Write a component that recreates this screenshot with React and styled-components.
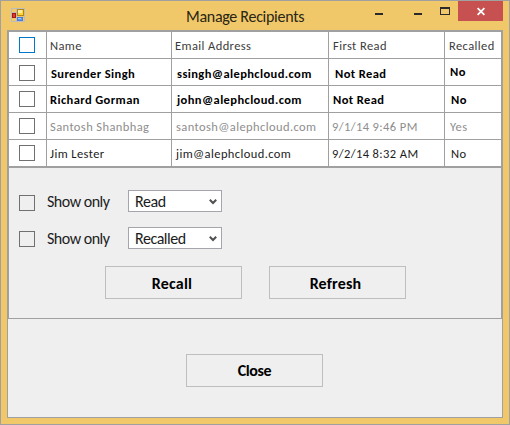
import React, { useState } from "react";
import styled, { createGlobalStyle, css } from "styled-components";

const line = "#a0a0a0";

const GlobalStyle = createGlobalStyle`
  *, *::before, *::after { box-sizing: border-box; }
  body { margin: 0; overflow: hidden; }
`;

const Window = styled.div`
  display: flex;
  flex-direction: column;
  width: 510px;
  height: 425px;
  padding: 0 6px 6px;
  border: 1px solid ${line};
  background: #f0c869;
  color: #000;
  font-family: Calibri, Carlito, "Open Sans", sans-serif;
`;

const TitleBar = styled.header`
  display: grid;
  grid-template-columns: 175px 1fr auto;
  height: 29px;
  flex: none;
`;

const AppIcon = styled.svg`
  margin: 7px 0 0 4px;
`;

const Title = styled.h1`
  margin: 0 0 0 4px;
  font-size: 16px;
  font-weight: 400;
  line-height: 31px;
  letter-spacing: -0.29px;
  color: #2b2515;
  white-space: nowrap;
`;

const Controls = styled.div`
  display: flex;
  align-items: flex-start;
`;

const ControlButton = styled.button`
  display: block;
  width: ${(p) => p.$width}px;
  height: 20px;
  padding: 0;
  border: 0;
  background: ${(p) => (p.$danger ? "#c75050" : "transparent")};

  svg { display: block; }
`;

const Body = styled.main`
  display: flex;
  flex-direction: column;
  flex: 1;
  border: 1px solid ${line};
  background: #efefef;
`;

const Panel = styled.section`
  height: 288px;
  border: 1px solid ${line};
`;

const Table = styled.div`
  border-bottom: 2px solid ${line};
  background: #fff;
`;

const tones = {
  header: css`color: #3c3c3c;`,
  unread: css`font-weight: 700;`,
  muted: css`color: #8e8e8e;`,
  normal: css`color: #1c1c1c;`,
};

const Row = styled.div`
  display: grid;
  grid-template-columns: 38px 125px 157px 116px 56px;
  height: 27px;
  font-size: 12.5px;
  letter-spacing: 0.4px;
  ${(p) => tones[p.$tone]}

  & > * { border-bottom: 1px solid ${line}; }
  &:last-child { height: 26px; }
  &:last-child > * { border-bottom: 0; }
`;

const Cell = styled.div`
  padding: ${(p) => p.$top ?? 1}px 0 0 ${(p) => p.$left ?? 4}px;
  border-right: 1px solid ${line};
  line-height: 26px;
  white-space: nowrap;
  overflow: hidden;

  &:last-child { border-right: 0; }
`;

const CheckCell = styled(Cell)`
  padding: ${(p) => p.$top}px 0 0 10px;
`;

const Checkbox = styled.input`
  appearance: none;
  display: block;
  flex: none;
  width: 16px;
  height: 16px;
  margin: 0;
  border: 1px solid ${(p) => (p.$active ? "#0077c8" : "#707070")};
  background: ${(p) => (p.$plain ? "transparent" : "#fff")};

  &:checked { box-shadow: inset 0 0 0 3px #fff; background: #404040; }
`;

const Filters = styled.div`
  display: grid;
  gap: 15px;
  padding: 22px 0 0 10px;
`;

const FilterRow = styled.div`
  display: flex;
  align-items: flex-start;
  height: 22px;
`;

const FilterCheck = styled.div`
  padding-top: ${(p) => p.$top}px;
`;

const FilterLabel = styled.span`
  width: 81px;
  margin-left: 12px;
  font-size: 16px;
  line-height: 24px;
  letter-spacing: -0.5px;
  color: #1c1c1c;
`;

const Select = styled.button`
  display: flex;
  align-items: center;
  justify-content: space-between;
  width: 94px;
  height: 22px;
  padding: 2px 4px 0 6px;
  border: 1px solid #a5a5ad;
  background: #fff;
  color: #1c1c1c;
  font: 400 16px/20px Calibri, Carlito, "Open Sans", sans-serif;
  letter-spacing: -0.45px;
`;

const Actions = styled.div`
  display: flex;
  gap: 27px;
  padding: 17px 0 0 96px;
`;

const Footer = styled.footer`
  display: flex;
  padding: 35px 0 0 178px;
`;

const Button = styled.button`
  width: 137px;
  height: 33px;
  padding: ${(p) => p.$top ?? 2}px ${(p) => p.$right ?? 3}px 0 0;
  border: 1px solid #bebebe;
  background: transparent;
  color: #000;
  font: 700 16px/28px Calibri, Carlito, "Open Sans", sans-serif;
  letter-spacing: ${(p) => p.$tracking ?? 0.2}px;
`;

const recipients = [
  { name: "Surender Singh", email: "ssingh@alephcloud.com", read: "Not Read", recalled: "No", tone: "unread", boxTop: 6, top: 2, recalledTop: 0, lefts: [4, 5, 6, 5] },
  { name: "Richard Gorman", email: "john@alephcloud.com", read: "Not Read", recalled: "No", tone: "unread", boxTop: 5, top: 1, recalledTop: 1, lefts: [3, 5, 4, 6] },
  { name: "Santosh Shanbhag", email: "santosh@alephcloud.com", read: "9/1/14 9:46 PM", recalled: "Yes", tone: "muted", boxTop: 5, top: 1, recalledTop: 1, lefts: [3, 4, 3, 5] },
  { name: "Jim Lester", email: "jim@alephcloud.com", read: "9/2/14 8:32 AM", recalled: "No", tone: "normal", boxTop: 5, top: 1, recalledTop: 1, lefts: [3, 4, 3, 6] },
];

function Filter({ value, boxTop }) {
  return (
    <FilterRow>
      <FilterCheck $top={boxTop}>
        <Checkbox type="checkbox" $plain aria-label={`Show only ${value}`} />
      </FilterCheck>
      <FilterLabel>Show only</FilterLabel>
      <Select type="button">
        {value}
        <svg width="8" height="6" viewBox="0 0 8 6" fill="none" stroke="#505050" strokeWidth="2">
          <path d="M0.8 0.7 4 4 7.2 0.7" />
        </svg>
      </Select>
    </FilterRow>
  );
}

function RecipientRow({ item }) {
  const [checked, setChecked] = useState(false);
  return (
    <Row $tone={item.tone}>
      <CheckCell $top={item.boxTop}>
        <Checkbox
          type="checkbox"
          aria-label={item.name}
          checked={checked}
          onChange={(e) => setChecked(e.target.checked)}
        />
      </CheckCell>
      <Cell $top={item.top} $left={item.lefts[0]}>{item.name}</Cell>
      <Cell $top={item.top} $left={item.lefts[1]}>{item.email}</Cell>
      <Cell $top={item.top} $left={item.lefts[2]}>{item.read}</Cell>
      <Cell $top={item.recalledTop} $left={item.lefts[3]}>{item.recalled}</Cell>
    </Row>
  );
}

export default function App() {
  return (
    <>
      <GlobalStyle />
      <Window>
        <TitleBar>
          <AppIcon width="14" height="14" viewBox="0 0 14 14">
            <path d="M.5.5h13v13H.5zM.5 4.5h5M5.5.5v13M.5 9.5h13" fill="none" stroke="#bdbdbd" />
            <rect x="1.5" y="5.5" width="3" height="4" fill="#e03a2c" stroke="#a01818" />
            <rect x="6.5" y="1.5" width="6" height="6" fill="#ffd43c" stroke="#b48612" />
            <rect x="7" y="2" width="4" height="3" fill="#ffec98" />
            <rect x="6.5" y="9.5" width="5" height="3" fill="#5d9cff" stroke="#4a7cdc" />
            <rect x="7" y="10" width="3" height="1" fill="#a4cbff" />
          </AppIcon>
          <Title>Manage Recipients</Title>
          <Controls>
            <ControlButton $width={39} aria-label="Collapse">
              <svg width="39" height="20"><rect x="0" y="12" width="8" height="2" fill="#2a2a2a" /></svg>
            </ControlButton>
            <ControlButton $width={26} aria-label="Minimize">
              <svg width="26" height="20"><rect x="0" y="12" width="8" height="2" fill="#2a2a2a" /></svg>
            </ControlButton>
            <ControlButton $width={18} aria-label="Maximize">
              <svg width="18" height="20"><path d="M0 6h10v8H0zM1 8v5h8V8z" fill="#2a2a2a" fillRule="evenodd" /></svg>
            </ControlButton>
            <ControlButton $width={45} $danger aria-label="Close window">
              <svg width="45" height="20"><path d="M19.6 7.2l6.8 6.6M26.4 7.2l-6.8 6.6" stroke="#fff" strokeWidth="1.8" /></svg>
            </ControlButton>
          </Controls>
        </TitleBar>
        <Body>
          <Panel>
            <Table>
              <Row $tone="header">
                <CheckCell $top={5}>
                  <Checkbox type="checkbox" $active aria-label="Select all" />
                </CheckCell>
                <Cell $left={3}>Name</Cell>
                <Cell $left={3}>Email Address</Cell>
                <Cell $left={4}>First Read</Cell>
                <Cell $left={4}>Recalled</Cell>
              </Row>
              {recipients.map((item) => (
                <RecipientRow key={item.email} item={item} />
              ))}
            </Table>
            <Filters>
              <Filter value="Read" boxTop={5} />
              <Filter value="Recalled" boxTop={4} />
            </Filters>
            <Actions>
              <Button type="button">Recall</Button>
              <Button type="button" $right={4}>Refresh</Button>
            </Actions>
          </Panel>
          <Footer>
            <Button type="button" $tracking={-0.35} $right={0} $top={0}>Close</Button>
          </Footer>
        </Body>
      </Window>
    </>
  );
}
